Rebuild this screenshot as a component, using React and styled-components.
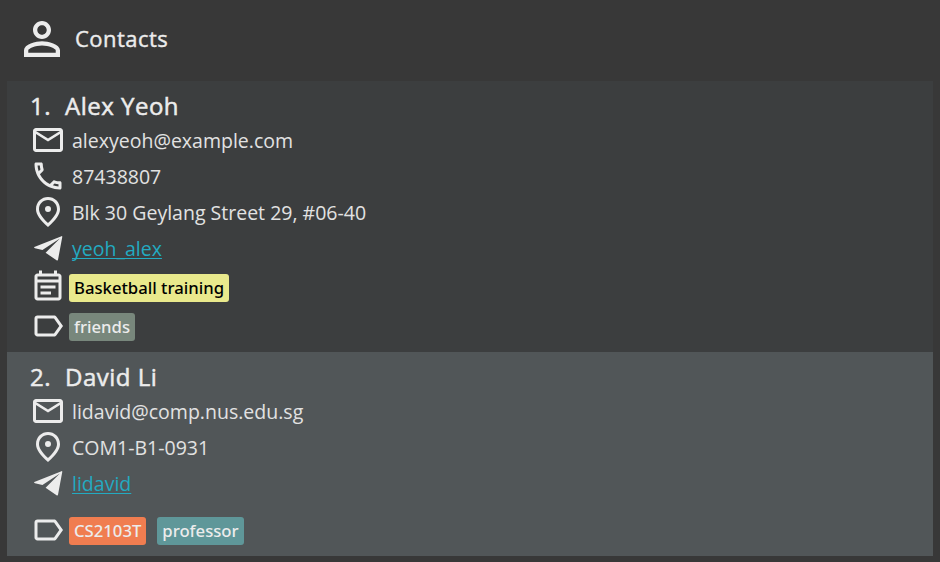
import React from "react";
import styled, { createGlobalStyle } from "styled-components";

const GlobalStyle = createGlobalStyle`
  * { box-sizing: border-box; }
  body {
    margin: 0;
    background: #383838;
    color: #ececec;
    font-family: "Open Sans", "Liberation Sans", sans-serif;
  }
`;

const Panel = styled.main`
  height: 562px;
  padding: 0 7px 6px;
  display: flex;
  flex-direction: column;
`;

const Header = styled.header`
  height: 81px;
  padding: 12px 0 15px 8px;
  display: flex;
  gap: 6px;
`;

const Title = styled.h1`
  margin: 0;
  font-size: 22px;
  line-height: 53px;
  font-weight: 400;
  letter-spacing: 0.45px;
  -webkit-text-stroke: 0.4px currentColor;
`;

const Card = styled.section`
  height: ${({ $height }) => $height}px;
  padding: 10px 23px 0;
  background: ${({ $alternate }) => ($alternate ? "#515658" : "#3c3e3f")};
`;

const Name = styled.h2`
  margin: 0;
  display: flex;
  height: 31px;
  font-size: 24px;
  line-height: 30px;
  font-weight: 400;
  letter-spacing: 0.5px;
  -webkit-text-stroke: 0.5px currentColor;
`;

const Index = styled.span`
  width: 35px;
`;

const Row = styled.div`
  display: flex;
  height: 36px;
  gap: 6px;
  font-size: 19.53px;
  line-height: 37px;
  font-weight: 400;
  white-space: nowrap;
  color: #e2e2e2;
`;

const TagRow = styled(Row)`
  height: ${({ $height }) => $height || 36}px;
  margin-top: ${({ $space }) => $space || 0}px;
  gap: 3px;
`;

const Icon = styled.svg`
  display: block;
  flex: none;
  width: ${({ $size }) => $size || 36}px;
  height: ${({ $size }) => $size || 36}px;
  fill: #ececec;
`;

const Link = styled.a`
  color: #23aac1;
  text-decoration: underline;
  text-decoration-thickness: 1px;
  text-decoration-skip-ink: none;
  text-underline-offset: 2px;
`;

const Tags = styled.div`
  display: flex;
  gap: 11px;
  padding-top: ${({ $drop }) => $drop}px;
`;

const Tag = styled.span`
  height: 28px;
  padding: 0 5px;
  border-radius: 3px;
  font-family: "Noto Sans", sans-serif;
  font-size: 16.7px;
  line-height: 27px;
  font-weight: 500;
  color: ${({ $ink }) => $ink || "#ececec"};
  background: ${({ $fill }) => $fill};
`;

const paths = {
  person:
    "M12 5.9c1.16 0 2.1.94 2.1 2.1s-.94 2.1-2.1 2.1S9.9 9.16 9.9 8s.94-2.1 2.1-2.1m0 9c2.97 0 6.1 1.46 6.1 2.1v1.1H5.9V17c0-.64 3.13-2.1 6.1-2.1M12 4C9.79 4 8 5.79 8 8s1.79 4 4 4 4-1.79 4-4-1.79-4-4-4zm0 9c-2.67 0-8 1.34-8 4v3h16v-3c0-2.66-5.33-4-8-4z",
  mail: "M22 6c0-1.1-.9-2-2-2H4c-1.1 0-2 .9-2 2v12c0 1.1.9 2 2 2h16c1.1 0 2-.9 2-2V6zm-2 0-8 5-8-5h16zm0 12H4V8l8 5 8-5v10z",
  phone:
    "M6.54 5c.06.89.21 1.76.45 2.59l-1.2 1.2c-.41-1.2-.67-2.47-.76-3.79h1.51m9.86 12.02c.85.24 1.72.39 2.6.45v1.49c-1.32-.09-2.59-.35-3.8-.75l1.2-1.19M7.5 3H4c-.55 0-1 .45-1 1 0 9.39 7.61 17 17 17 .55 0 1-.45 1-1v-3.49c0-.55-.45-1-1-1-1.24 0-2.45-.2-3.57-.57-.1-.04-.21-.05-.31-.05-.26 0-.51.1-.71.29l-2.2 2.2c-2.83-1.45-5.15-3.76-6.59-6.59l2.2-2.2c.28-.28.36-.67.25-1.02C8.7 6.45 8.5 5.25 8.5 4c0-.55-.45-1-1-1z",
  place:
    "M12 2c4.2 0 8 3.22 8 8.2 0 3.32-2.67 7.25-8 11.8-5.33-4.55-8-8.48-8-11.8C4 5.22 7.8 2 12 2zm6 8.2c0-3.57-2.61-6.2-6-6.2s-6 2.63-6 6.2c0 2.34 1.95 5.44 6 9.14 4.05-3.7 6-6.8 6-9.14zM12 8a2 2 0 1 0 0 4 2 2 0 0 0 0-4z",
  plane:
    "M21 4.1c.4-.1.6.1.5.5l-2.8 15.1c-.1.6-.5.7-1 .4l-7.3-4.9 9.5-9.5L8.3 13.3l-5-1.2c-.8-.3-.8-.6 0-.9z",
  event:
    "M19 3h-1V1h-2v2H8V1H6v2H5c-1.1 0-2 .9-2 2v14c0 1.1.9 2 2 2h14c1.1 0 2-.9 2-2V5c0-1.1-.9-2-2-2zm0 16H5V9h14v10zm0-12H5V5h14v2zM7 11h10v2H7zm0 4h7v2H7z",
  label:
    "M17.63 5.84C17.27 5.33 16.67 5 16 5L5 5.01C3.9 5.01 3 5.9 3 7v10c0 1.1.9 1.99 2 1.99L16 19c.67 0 1.27-.33 1.63-.84L22 12l-4.37-6.16zM16 17H5V7h11l3.55 5L16 17z",
};

function Glyph({ name, size }) {
  return (
    <Icon viewBox="0 0 24 24" $size={size} aria-hidden="true">
      <path d={paths[name]} />
    </Icon>
  );
}

function Detail({ icon, children }) {
  return (
    <Row>
      <Glyph name={icon} />
      <span>{children}</span>
    </Row>
  );
}

export default function App() {
  return (
    <>
      <GlobalStyle />
      <Panel>
        <Header>
          <Glyph name="person" size={54} />
          <Title>Contacts</Title>
        </Header>
        <Card $height={271}>
          <Name>
            <Index>1.</Index>Alex Yeoh
          </Name>
          <Detail icon="mail">alexyeoh@example.com</Detail>
          <Detail icon="phone">87438807</Detail>
          <Detail icon="place">Blk 30 Geylang Street 29, #06-40</Detail>
          <Detail icon="plane">
            <Link href="#yeoh_alex">yeoh_alex</Link>
          </Detail>
          <TagRow $space={3} $height={39}>
            <Glyph name="event" />
            <Tags $drop={5}>
              <Tag $fill="#e9e98c" $ink="#000000">Basketball training</Tag>
            </Tags>
          </TagRow>
          <TagRow>
            <Glyph name="label" />
            <Tags $drop={5}>
              <Tag $fill="#78877c">friends</Tag>
            </Tags>
          </TagRow>
        </Card>
        <Card $height={204} $alternate>
          <Name>
            <Index>2.</Index>David Li
          </Name>
          <Detail icon="mail">lidavid@comp.nus.edu.sg</Detail>
          <Detail icon="place">COM1-B1-0931</Detail>
          <Detail icon="plane">
            <Link href="#lidavid">lidavid</Link>
          </Detail>
          <TagRow $space={11}>
            <Glyph name="label" />
            <Tags $drop={5}>
              <Tag $fill="#f07d50">CS2103T</Tag>
              <Tag $fill="#5f9799">professor</Tag>
            </Tags>
          </TagRow>
        </Card>
      </Panel>
    </>
  );
}
